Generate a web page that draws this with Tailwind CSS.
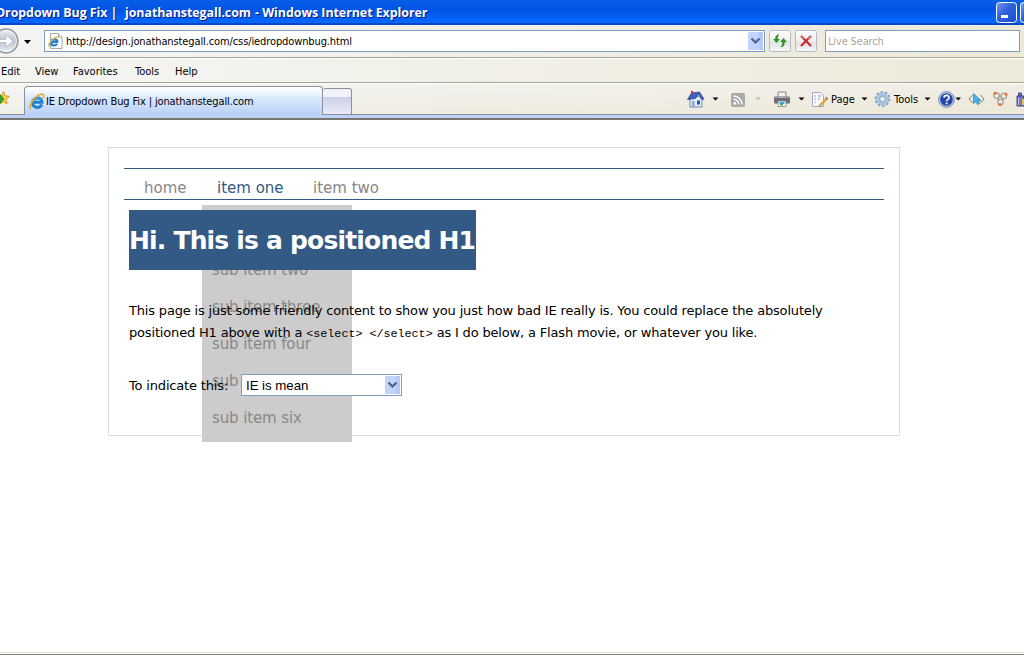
<!DOCTYPE html>
<html lang="en">
<head>
<meta charset="utf-8">
<title>IE Dropdown Bug Fix | jonathanstegall.com</title>
<script src="https://cdn.jsdelivr.net/npm/@tailwindcss/browser@4"></script>
</head>
<body class="w-[1024px] h-[655px] overflow-hidden bg-white text-black font-['DejaVu_Sans_Condensed','DejaVu_Sans',sans-serif] text-[11px] whitespace-nowrap">
<div class="flex flex-col h-[655px]">

<!-- Title bar -->
<header class="h-[25px] shrink-0 flex items-center justify-between bg-linear-to-b from-[#0a5fe8] via-[#0054e3] via-40% to-[#0668ff] border-b-2 border-[#0349c9]">
  <h1 class="-ml-[4px] pt-[3px] text-white font-bold text-[12.4px] tracking-[-0.05px] font-['Open_Sans',sans-serif] [text-shadow:1px_1px_0_#0a1883] whitespace-pre flex"><span class="w-[129px]">Dropdown Bug Fix |  </span><span class="w-[130px]">jonathanstegall.com</span><span class="tracking-[-0.03px]">- Windows Internet Explorer</span></h1>
  <div class="flex gap-[3px] w-[28px] overflow-hidden shrink-0 pt-[1px]">
    <svg class="shrink-0" width="21" height="21" viewBox="0 0 21 21"><defs><linearGradient id="wb" x2="1" y2="1"><stop stop-color="#7499f0"/><stop offset=".45" stop-color="#2d60da"/><stop offset="1" stop-color="#1c4fd0"/></linearGradient></defs><rect x=".5" y=".5" width="20" height="20" rx="3" fill="url(#wb)" stroke="#fff"/><path d="M5 13h7v3h-7z" fill="#fff"/></svg>
    <svg class="shrink-0" width="21" height="21" viewBox="0 0 21 21"><rect x=".5" y=".5" width="20" height="20" rx="3" fill="url(#wb)" stroke="#fff"/></svg>
  </div>
</header>

<!-- Address row -->
<div class="h-[34px] shrink-0 flex pt-[5px] bg-linear-to-r from-[#f4f4f3] to-[#ece9d8] border-b border-white shadow-[inset_0_-1px_0_#a6a493]">
  <svg class="shrink-0 -mt-[5px]" width="44" height="32" viewBox="0 0 44 32"><defs><linearGradient id="fw" x2="0" y2="1"><stop stop-color="#eef1f4"/><stop offset=".5" stop-color="#bac3cd"/><stop offset="1" stop-color="#e9f1f7"/></linearGradient></defs><circle cx="6" cy="16" r="12" fill="url(#fw)" stroke="#8f989f" stroke-width="1.4"/><circle cx="6" cy="16" r="10.3" fill="none" stroke="#fff" stroke-opacity=".6"/><path d="M-2 14.500h8V10l7 6-7 6v-4.500h-8z" fill="#fff" stroke="#aab3bc" stroke-width=".7"/><path d="M24 15h7l-3.500 4z" fill="#000"/></svg>
  <div class="w-[721px] h-[22px] shrink-0 border border-[#7f9db9] bg-white flex items-center pl-[3px] pr-px">
    <svg class="shrink-0" width="16" height="18" viewBox="0 0 16 18"><path d="M2.500 1.500h8l3.500 3.500v11.500H2.500z" fill="#fff" stroke="#a7a7a7"/><path d="M10.500 1.500V5H14" fill="#eee" stroke="#a7a7a7"/><path d="M9 11.800c-1.700 2.900-6.100 1.800-5.900-1.500C3.400 6.200 9.800 6.400 9.300 9.900H3.800" fill="none" stroke="#1e80d4" stroke-width="2.200"/><path d="M1.500 14.800C-1 12 7.500 3.500 10.800 5.500" fill="none" stroke="#eab03b" stroke-width="1.400"/></svg>
    <span class="ml-[2px] pt-[2px] tracking-[-0.11px] grow">http://design.jonathanstegall.com/css/iedropdownbug.html</span>
    <svg width="15" height="18" viewBox="0 0 15 18"><rect width="15" height="18" rx="1" fill="#c2d3fc"/><rect x="11" width="4" height="18" fill="#b2c8f8"/><path d="M3.500 6.500l4 4 4-4" fill="none" stroke="#4d6185" stroke-width="2.200"/></svg>
  </div>
  <svg class="shrink-0 ml-[4px]" width="22" height="22" viewBox="0 0 22 22"><defs><linearGradient id="bt" x2="0" y2="1"><stop stop-color="#fff"/><stop offset=".5" stop-color="#f0f0f1"/><stop offset=".55" stop-color="#dfe2e8"/><stop offset="1" stop-color="#f7f7f8"/></linearGradient></defs><rect x=".5" y=".5" width="21" height="21" rx="2" fill="url(#bt)" stroke="#b5bac4"/><path d="M10.500 4.500C7.200 4.500 6.200 6 6.200 9H4l3.500 4L11 9H8.700c0-2 .3-3.200 1.800-4.500z" fill="#2f9420"/><path d="M11.500 17c3.300 0 4.300-2 4.300-5H18l-3.500-4L11 12h2.300c0 2-.3 3.700-1.800 5z" fill="#2f9420"/></svg>
  <svg class="shrink-0 ml-[4px]" width="22" height="22" viewBox="0 0 22 22"><rect x=".5" y=".5" width="21" height="21" rx="2" fill="url(#bt)" stroke="#b5bac4"/><path d="M6 6l10 10M16 6L6 16" stroke="#c9292c" stroke-width="2.200"/><path d="M6 6l3 3M16 6l-3 3" stroke="#e07a74" stroke-width="1.200"/></svg>
  <div class="ml-[8px] w-[195px] h-[22px] shrink-0 border border-[#7f9db9] bg-white text-[#aca899] flex items-center pl-[2px] pt-[2px] tracking-[-0.15px]">Live Search</div>
</div>

<!-- Menu bar -->
<nav class="h-[25px] shrink-0 flex items-center pt-[2px] bg-linear-to-r from-[#f5f5f4] to-[#edead9] border-b border-white shadow-[inset_0_-1px_0_#a6a493]">
  <span class="ml-px w-[34px]">Edit</span><span class="w-[38px]">View</span><span class="w-[62px]">Favorites</span><span class="w-[40px]">Tools</span><span>Help</span>
</nav>

<!-- Tab row -->
<div class="h-[36px] shrink-0 flex flex-col bg-linear-to-br from-[#f5f5f5] to-[#ebe7d5]">
  <div class="h-[31px] flex items-end">
    <div class="w-[24px] h-[31px] shrink-0 border-b border-[#8a919c]"><svg width="23" height="30" viewBox="0 0 23 30"><path d="M3.500 7.500L5.200 12l4.300.3-3.500 3.200 1 4.500-3.500-2.300L-1 20l1-4.500-3-3.200 4.800-.3z" fill="#fcd35a" stroke="#d6951c"/><path d="M-2 13h2v-2.500l4 4.500-4 4.500V17h-2z" fill="#35a528" stroke="#167b12" stroke-width=".7"/></svg></div>
    <div class="w-[299px] h-[29px] shrink-0 flex items-center pl-[3px] pt-[2px] rounded-t-[4px] border border-b-0 border-[#8a919c] bg-linear-to-b from-[#fdfeff] from-5% via-[#d8e9fb] via-40% to-[#b9d0f8]">
      <svg width="18" height="18" viewBox="0 0 18 18"><path d="M13.800 11.300c-2.300 4.900-9.300 3.700-9.200-1.700.3-6 9.700-6.100 9.400-.3H6" fill="none" stroke="#1f80d2" stroke-width="3"/><path d="M13 7c-1.500-2.700-5.500-3.300-8 .2" fill="none" stroke="#5cc0f5" stroke-width="1"/><path d="M3 16C-1.500 13.500 10-1 15 1.500c1.200.7.800 2.200 0 3.500" fill="none" stroke="#e8aa2e" stroke-width="1.600"/></svg>
      <span class="pt-px tracking-[-0.12px]">IE Dropdown Bug Fix | jonathanstegall.com</span>
    </div>
    <div class="w-[29px] h-[27px] shrink-0 rounded-t-[3px] border border-l-0 border-[#8a919c] bg-linear-to-b from-[#f2f3fa] from-30% via-[#cdd1e5] via-34% to-[#eaeafa]"></div>
    <div class="w-[672px] h-[31px] border-b border-[#8a919c] flex items-center">
      <svg class="ml-[335px] shrink-0" width="18" height="18" viewBox="0 0 18 18"><path d="M3 8.500L12 6l3 4v7H3z" fill="#e4edf9" stroke="#7588ac"/><path d="M0.500 9.500L4.500 3l8-1 4.500 7-2 .5-3.500-5.500-3 4.500z" fill="#3b61c5" stroke="#243f93" stroke-width=".7"/><path d="M4 1h2v3H4z" fill="#c33"/><path d="M5 11h2.500v6H5z" fill="#8fa7cc"/><path d="M10 10.500h3v4h-3z" fill="#1a5cb4"/></svg>
      <svg class="ml-[7px] shrink-0" width="7" height="4"><path d="M.5.5h6l-3 3z"/></svg>
      <svg class="ml-[12px] mt-[2px] shrink-0" width="14" height="14" viewBox="0 0 14 14"><rect width="14" height="14" rx="2" fill="#aaa9a5"/><circle cx="3.800" cy="10.300" r="1.400" fill="#fff"/><path d="M2.500 6.200a5.300 5.300 0 0 1 5.300 5.300M2.500 3a8.500 8.500 0 0 1 8.500 8.500" fill="none" stroke="#fff" stroke-width="1.500"/></svg>
      <svg class="ml-[10px] shrink-0" width="7" height="4"><path d="M.5.5h5l-2.500 3z" fill="#bdbbb0"/></svg>
      <svg class="ml-[12px] shrink-0" width="16" height="16" viewBox="0 0 16 16"><path d="M4 1h8v6H4z" fill="#eff1f3" stroke="#888"/><rect y="5.500" width="16" height="7" rx="1" fill="#6d7177"/><path d="M1 6.500h14" stroke="#a8acb2"/><path d="M4 10h8v5.500H4z" fill="#fff" stroke="#707070" stroke-width=".7"/><path d="M5.500 11h5v2h-5z" fill="#3ba1d0"/><path d="M6 13h3v1.500H6z" fill="#50aa42"/></svg>
      <svg class="ml-[8px] shrink-0" width="7" height="4"><path d="M.5.5h6l-3 3z"/></svg>
      <svg class="ml-[6px] shrink-0" width="17" height="17" viewBox="0 0 17 17"><path d="M1.500 1.500h8l3 3v11h-11z" fill="#fafafe" stroke="#a3aabd"/><path d="M3.500 5h1.500m2 0h3M3.500 8h1.500m2 0h2M3.500 11h1.500" stroke="#8495b5" stroke-width="1.200"/><path d="M15.500 6.500L9 13l-1 2.500 2.500-1L16.500 8z" fill="#f2b54b" stroke="#a9711c" stroke-width=".5"/><path d="M14.800 6.500l1.700 1.700" stroke="#d6503a" stroke-width="1.500"/></svg>
      <span class="ml-[3px] pt-[2px] w-[30px] shrink-0">Page</span>
      <svg class="mr-[6px] shrink-0" width="7" height="4"><path d="M.5.5h6l-3 3z"/></svg>
      <svg class="shrink-0" width="17" height="18" viewBox="0 0 18 18"><circle cx="9" cy="9" r="7.300" fill="none" stroke="#7799bd" stroke-width="2" stroke-dasharray="2.700 1.880"/><circle cx="9" cy="9" r="5" fill="none" stroke="#a8c6e2" stroke-width="3.600"/><circle cx="9" cy="9" r="3" fill="#edf0eb" stroke="#6588af" stroke-width=".8"/></svg>
      <span class="ml-[3px] pt-[2px] w-[30px] shrink-0">Tools</span>
      <svg class="mr-[7px] shrink-0" width="7" height="4"><path d="M.5.5h6l-3 3z"/></svg>
      <svg class="shrink-0" width="17" height="17" viewBox="0 0 17 17"><circle cx="8.500" cy="8.500" r="7.900" fill="#b6c5e8" stroke="#697bad" stroke-width=".8"/><circle cx="8.500" cy="8.500" r="6.300" fill="#2048ac"/><path d="M6 6.800c.2-3.400 5.500-3 5 .2-.2 1.400-2.400 1.500-2.400 3.200" fill="none" stroke="#fff" stroke-width="1.700"/><path d="M7.700 11.500h1.800v1.800H7.700z" fill="#fff"/></svg>
      <svg class="shrink-0" width="7" height="4"><path d="M.5.5h5.500l-2.700 3z"/></svg>
      <svg class="ml-[6px] shrink-0" width="17" height="14" viewBox="0 0 17 14"><path d="M4.500 3L1 7l3.500 4M12.500 3L16 7l-3.500 4" fill="none" stroke="#8a8066"/><path d="M5.500 1.500v10l2.500-2 1.500 3 2-1-1.500-3h3z" fill="#43b4ec" stroke="#1a7ac0" stroke-width=".7"/></svg>
      <svg class="ml-[7px] shrink-0" width="17" height="16" viewBox="0 0 17 16"><g fill="none" stroke="#a8a198" stroke-width="1.300"><circle cx="4.600" cy="4.600" r="2.800"/><circle cx="11.800" cy="5" r="2.800"/><circle cx="8.500" cy="11" r="2.800"/><path d="M5.500 7l2 2.500M10.800 7.500L9.500 9.500M7 5h2.500"/></g><g fill="#ee6a3c"><circle cx="3" cy="2.300" r="1.500"/><circle cx="14" cy="3.200" r="1.500"/><circle cx="8" cy="13.500" r="1.500"/></g></svg>
      <svg class="ml-[7px] shrink-0" width="8" height="16" viewBox="0 0 8 16"><path d="M2.500 2h3v3h-3zM1 5h7v10H1z" fill="#7478be" stroke="#40448a"/><path d="M2.500 7v7" stroke="#c0c3ef"/><path d="M6 8h2v6H6z" fill="#e5c052"/></svg>
    </div>
  </div>
  <div class="h-[5px] shrink-0 bg-[#bdd0f5] border-b-2 border-[#77766d]"></div>
</div>

<!-- Web page -->
<div class="grow pt-[27px] font-['Verdana','DejaVu_Sans',sans-serif]">
  <div class="relative ml-[108px] w-[792px] h-[289px] border border-[#dcdcdc] px-[15px] pt-[20px]">
    <ul class="flex h-[32px] border-y border-[#335985] pl-[20px] text-[15px] leading-[38px] text-[#888]">
      <li class="w-[73px]">home</li>
      <li class="relative w-[96px] text-[#335985]">item one
        <ul class="absolute -left-[15px] top-[36px] w-[150px] h-[237px] bg-[#ccc] pl-[10px] pt-[10px] leading-[37px] tracking-[-0.12px] text-[#888]">
          <li>sub item one</li><li>sub item two</li><li>sub item three</li><li>sub item four</li><li>sub item five</li><li>sub item six</li>
        </ul>
      </li>
      <li>item two</li>
    </ul>
    <main class="relative z-10 pl-[5px] pt-[10px] text-[13px] leading-[22px] tracking-[-0.17px]">
      <h1 class="w-[347px] h-[60px] bg-[#335985] text-white font-bold text-[25px] leading-[62px] tracking-[-0.82px]">Hi. This is a positioned H1</h1>
      <p class="mt-[30px]">This page is just some friendly content to show you just how bad IE really is. You could replace the absolutely<br>positioned H1 above with a <code class="font-['Liberation_Mono',monospace] text-[11.75px] tracking-[-0.03px]">&lt;select&gt; &lt;/select&gt;</code> as I do below, a Flash movie, or whatever you like.</p>
      <div class="mt-[30px] h-[22px] flex items-start">
        <label class="w-[112px]">To indicate this:</label>
        <div class="-mt-px w-[161px] h-[22px] border border-[#7f9db9] bg-white flex items-center justify-between pl-[4px] pr-px text-[13.3px] tracking-[-0.05px] font-['Liberation_Sans',sans-serif]"><span class="pt-px">IE is mean</span>
          <svg width="15" height="18" viewBox="0 0 15 18"><rect width="15" height="18" rx="1" fill="#c2d3fc"/><rect x="11" width="4" height="18" fill="#b2c8f8"/><path d="M3.500 6.500l4 4 4-4" fill="none" stroke="#4d6185" stroke-width="2.200"/></svg>
        </div>
      </div>
    </main>
  </div>
</div>
<footer class="h-[3px] shrink-0 border-t border-[#e8e4d0] border-b border-b-[#85847a] bg-white"></footer>
</div>
</body>
</html>
